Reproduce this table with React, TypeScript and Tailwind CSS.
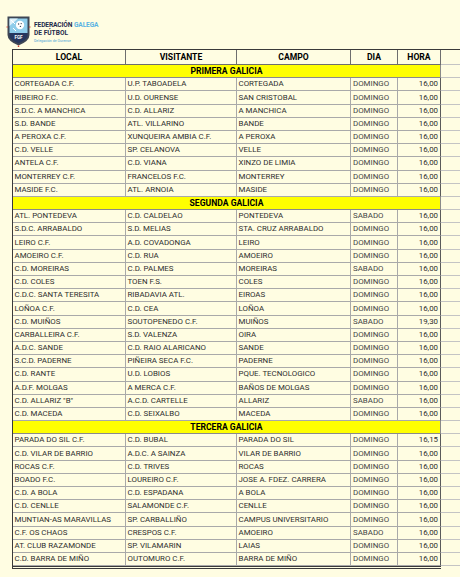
import React from 'react';

type Match = [string, string, string, string, string];

const sections: { title: string; rows: Match[] }[] = [
  {
    title: 'PRIMERA GALICIA',
    rows: [
      ['CORTEGADA C.F.', 'U.P. TABOADELA', 'CORTEGADA', 'DOMINGO', '16,00'],
      ['RIBEIRO F.C.', 'U.D. OURENSE', 'SAN CRISTOBAL', 'DOMINGO', '16,00'],
      ['S.D.C. A MANCHICA', 'C.D. ALLARIZ', 'A MANCHICA', 'DOMINGO', '16,00'],
      ['S.D. BANDE', 'ATL. VILLARINO', 'BANDE', 'DOMINGO', '16,00'],
      ['A PEROXA C.F.', 'XUNQUEIRA AMBIA C.F.', 'A PEROXA', 'DOMINGO', '16,00'],
      ['C.D. VELLE', 'SP. CELANOVA', 'VELLE', 'DOMINGO', '16,00'],
      ['ANTELA C.F.', 'C.D. VIANA', 'XINZO DE LIMIA', 'DOMINGO', '16,00'],
      ['MONTERREY C.F.', 'FRANCELOS F.C.', 'MONTERREY', 'DOMINGO', '16,00'],
      ['MASIDE F.C.', 'ATL. ARNOIA', 'MASIDE', 'DOMINGO', '16,00'],
    ],
  },
  {
    title: 'SEGUNDA GALICIA',
    rows: [
      ['ATL. PONTEDEVA', 'C.D. CALDELAO', 'PONTEDEVA', 'SABADO', '16,00'],
      ['S.D.C. ARRABALDO', 'S.D. MELIAS', 'STA. CRUZ ARRABALDO', 'DOMINGO', '16,00'],
      ['LEIRO C.F.', 'A.D. COVADONGA', 'LEIRO', 'DOMINGO', '16,00'],
      ['AMOEIRO C.F.', 'C.D. RUA', 'AMOEIRO', 'DOMINGO', '16,00'],
      ['C.D. MOREIRAS', 'C.D. PALMES', 'MOREIRAS', 'SABADO', '16,00'],
      ['C.D. COLES', 'TOEN F.S.', 'COLES', 'DOMINGO', '16,00'],
      ['C.D.C. SANTA TERESITA', 'RIBADAVIA ATL.', 'EIROAS', 'DOMINGO', '16,00'],
      ['LOÑOA C.F.', 'C.D. CEA', 'LOÑOA', 'DOMINGO', '16,00'],
      ['C.D. MUIÑOS', 'SOUTOPENEDO C.F.', 'MUIÑOS', 'SABADO', '19,30'],
      ['CARBALLEIRA C.F.', 'S.D. VALENZA', 'OIRA', 'DOMINGO', '16,00'],
      ['A.D.C. SANDE', 'C.D. RAIO ALARICANO', 'SANDE', 'DOMINGO', '16,00'],
      ['S.C.D. PADERNE', 'PIÑEIRA SECA F.C.', 'PADERNE', 'DOMINGO', '16,00'],
      ['C.D. RANTE', 'U.D. LOBIOS', 'PQUE. TECNOLOGICO', 'DOMINGO', '16,00'],
      ['A.D.F. MOLGAS', 'A MERCA C.F.', 'BAÑOS DE MOLGAS', 'DOMINGO', '16,00'],
      ['C.D. ALLARIZ "B"', 'A.C.D. CARTELLE', 'ALLARIZ', 'SABADO', '16,00'],
      ['C.D. MACEDA', 'C.D. SEIXALBO', 'MACEDA', 'DOMINGO', '16,00'],
    ],
  },
  {
    title: 'TERCERA GALICIA',
    rows: [
      ['PARADA DO SIL C.F.', 'C.D. BUBAL', 'PARADA DO SIL', 'DOMINGO', '16,15'],
      ['C.D. VILAR DE BARRIO', 'A.D.C. A SAINZA', 'VILAR DE BARRIO', 'DOMINGO', '16,00'],
      ['ROCAS C.F.', 'C.D. TRIVES', 'ROCAS', 'DOMINGO', '16,00'],
      ['BOADO F.C.', 'LOUREIRO C.F.', 'JOSE A. FDEZ. CARRERA', 'DOMINGO', '16,00'],
      ['C.D. A BOLA', 'C.D. ESPADANA', 'A BOLA', 'DOMINGO', '16,00'],
      ['C.D. CENLLE', 'SALAMONDE C.F.', 'CENLLE', 'DOMINGO', '16,00'],
      ['MUNTIAN-AS MARAVILLAS', 'SP. CARBALLIÑO', 'CAMPUS UNIVERSITARIO', 'DOMINGO', '16,00'],
      ['C.F. OS CHAOS', 'CRESPOS C.F.', 'AMOEIRO', 'SABADO', '16,00'],
      ['AT. CLUB RAZAMONDE', 'SP. VILAMARIN', 'LAIAS', 'DOMINGO', '16,00'],
      ['C.D. BARRA DE MIÑO', 'OUTOMURO C.F.', 'BARRA DE MIÑO', 'DOMINGO', '16,00'],
    ],
  },
];

function Shield() {
  return (
    <svg width="25" height="33" viewBox="0 0 25 33">
      {/* outer shield */}
      <path d="M1.5 2.5 L23.5 2.5 L23.5 21 Q23.5 27 12.5 31.5 Q1.5 27 1.5 21 Z" fill="#3e4654" />
      <path d="M3.5 4.5 L21.5 4.5 L21.5 19 L3.5 19 Z" fill="#8fcdea" />
      <path d="M3.5 4.5 L12 4.5 L3.5 12 Z" fill="#dff1fa" />
      {/* crest */}
      <circle cx="14" cy="11" r="4.2" fill="#ffffff" />
      <circle cx="12.6" cy="10" r="0.7" fill="#3e4654" />
      <circle cx="15.2" cy="9.6" r="0.7" fill="#3e4654" />
      <circle cx="14.4" cy="12.4" r="0.7" fill="#3e4654" />
      <path d="M5 6 L9 10 M7 14 L10 17" stroke="#ffffff" strokeWidth="1" />
      <path d="M3.5 19 L21.5 19 L21.5 21.5 Q21.5 25.5 12.5 29.3 Q3.5 25.5 3.5 21.5 Z" fill="#26375e" />
      <text x="12.5" y="24.8" textAnchor="middle" fontSize="4.6" fontWeight="700" fill="#ffffff" fontFamily="Roboto, sans-serif">
        FGF
      </text>
      <path d="M12.5 31.5 L12.5 33" stroke="#d23a2b" strokeWidth="1.4" />
      <path d="M0.5 13 L1.8 13 M23.2 13 L24.5 13" stroke="#d23a2b" strokeWidth="1" />
    </svg>
  );
}

const colW = ['w-[113px]', 'w-[111px]', 'w-[114px]', 'w-[47px]', 'w-[43px]'];

function Row({ m }: { m: Match }) {
  return (
    <div className="flex h-[13.2px] text-[7.9px] leading-none text-[#2d2d2d]">
      {m.map((v, i) => (
        <div
          key={i}
          className={`${colW[i]} flex items-center shrink-0 border-b border-r border-[#a9a9a9] overflow-hidden whitespace-nowrap ${
            i === 4 ? 'justify-end pr-[2px] border-r-[#5a5a5a]' : 'pl-[1.5px]'
          } ${i === 3 ? 'pl-[2px] text-[#444]' : ''}`}
        >
          {v}
        </div>
      ))}
      <div className="w-[30px] shrink-0 border-b border-r border-[#c4c4c4]" />
    </div>
  );
}

function SectionTitle({ title }: { title: string }) {
  return (
    <div className="flex h-[13.2px] text-[8.6px] leading-none font-bold text-black">
      <div className="w-[428px] shrink-0 flex items-center justify-center bg-[#ffff00] border-b border-r border-[#8a8a8a]">
        {title}
      </div>
      <div className="w-[30px] shrink-0 border-b border-r border-[#c4c4c4]" />
    </div>
  );
}

export default function App() {
  const headers = ['LOCAL', 'VISITANTE', 'CAMPO', 'DIA', 'HORA'];
  return (
    <div className="w-[460px] h-[577px] overflow-hidden bg-[#fffde2]" style={{ fontFamily: 'Roboto, "Liberation Sans", sans-serif' }}>
      {/* Logo */}
      <div className="flex items-start h-[49px] pl-[6px] pt-[14px]">
        <Shield />
        <div className="ml-[3px] pt-[8px] flex flex-col leading-none">
          <div className="text-[6.6px] font-bold text-[#1f2b4d] tracking-[-0.1px]">
            FEDERACIÓN <span className="text-[#5ab3e2]">GALEGA</span>
          </div>
          <div className="text-[6.6px] font-bold text-[#1f2b4d] mt-[1.5px]">DE FÚTBOL</div>
          <div className="text-[3.6px] text-[#4aa6d8] mt-[3px]">Delegación de Ourense</div>
        </div>
      </div>

      {/* Table */}
      <div className="ml-[12px] w-[490px] border-l-[1.5px] border-[#3a3a3a]">
        <div className="flex h-[16px] text-[8.6px] leading-none font-bold text-black border-t-[1.5px] border-[#3a3a3a]">
          {headers.map((h, i) => (
            <div
              key={h}
              className={`${colW[i]} shrink-0 flex items-center justify-center border-b border-r border-[#6e6e6e]`}
            >
              {h}
            </div>
          ))}
          <div className="w-[30px] shrink-0 border-b border-r border-[#c4c4c4]" />
        </div>
        {sections.map((s) => (
          <React.Fragment key={s.title}>
            <SectionTitle title={s.title} />
            {s.rows.map((m, i) => (
              <Row key={i} m={m} />
            ))}
          </React.Fragment>
        ))}
        <div className="w-[428px] h-[3px] border-t-[1px] border-b-[1px] border-[#3a3a3a]" />
      </div>
    </div>
  );
}
